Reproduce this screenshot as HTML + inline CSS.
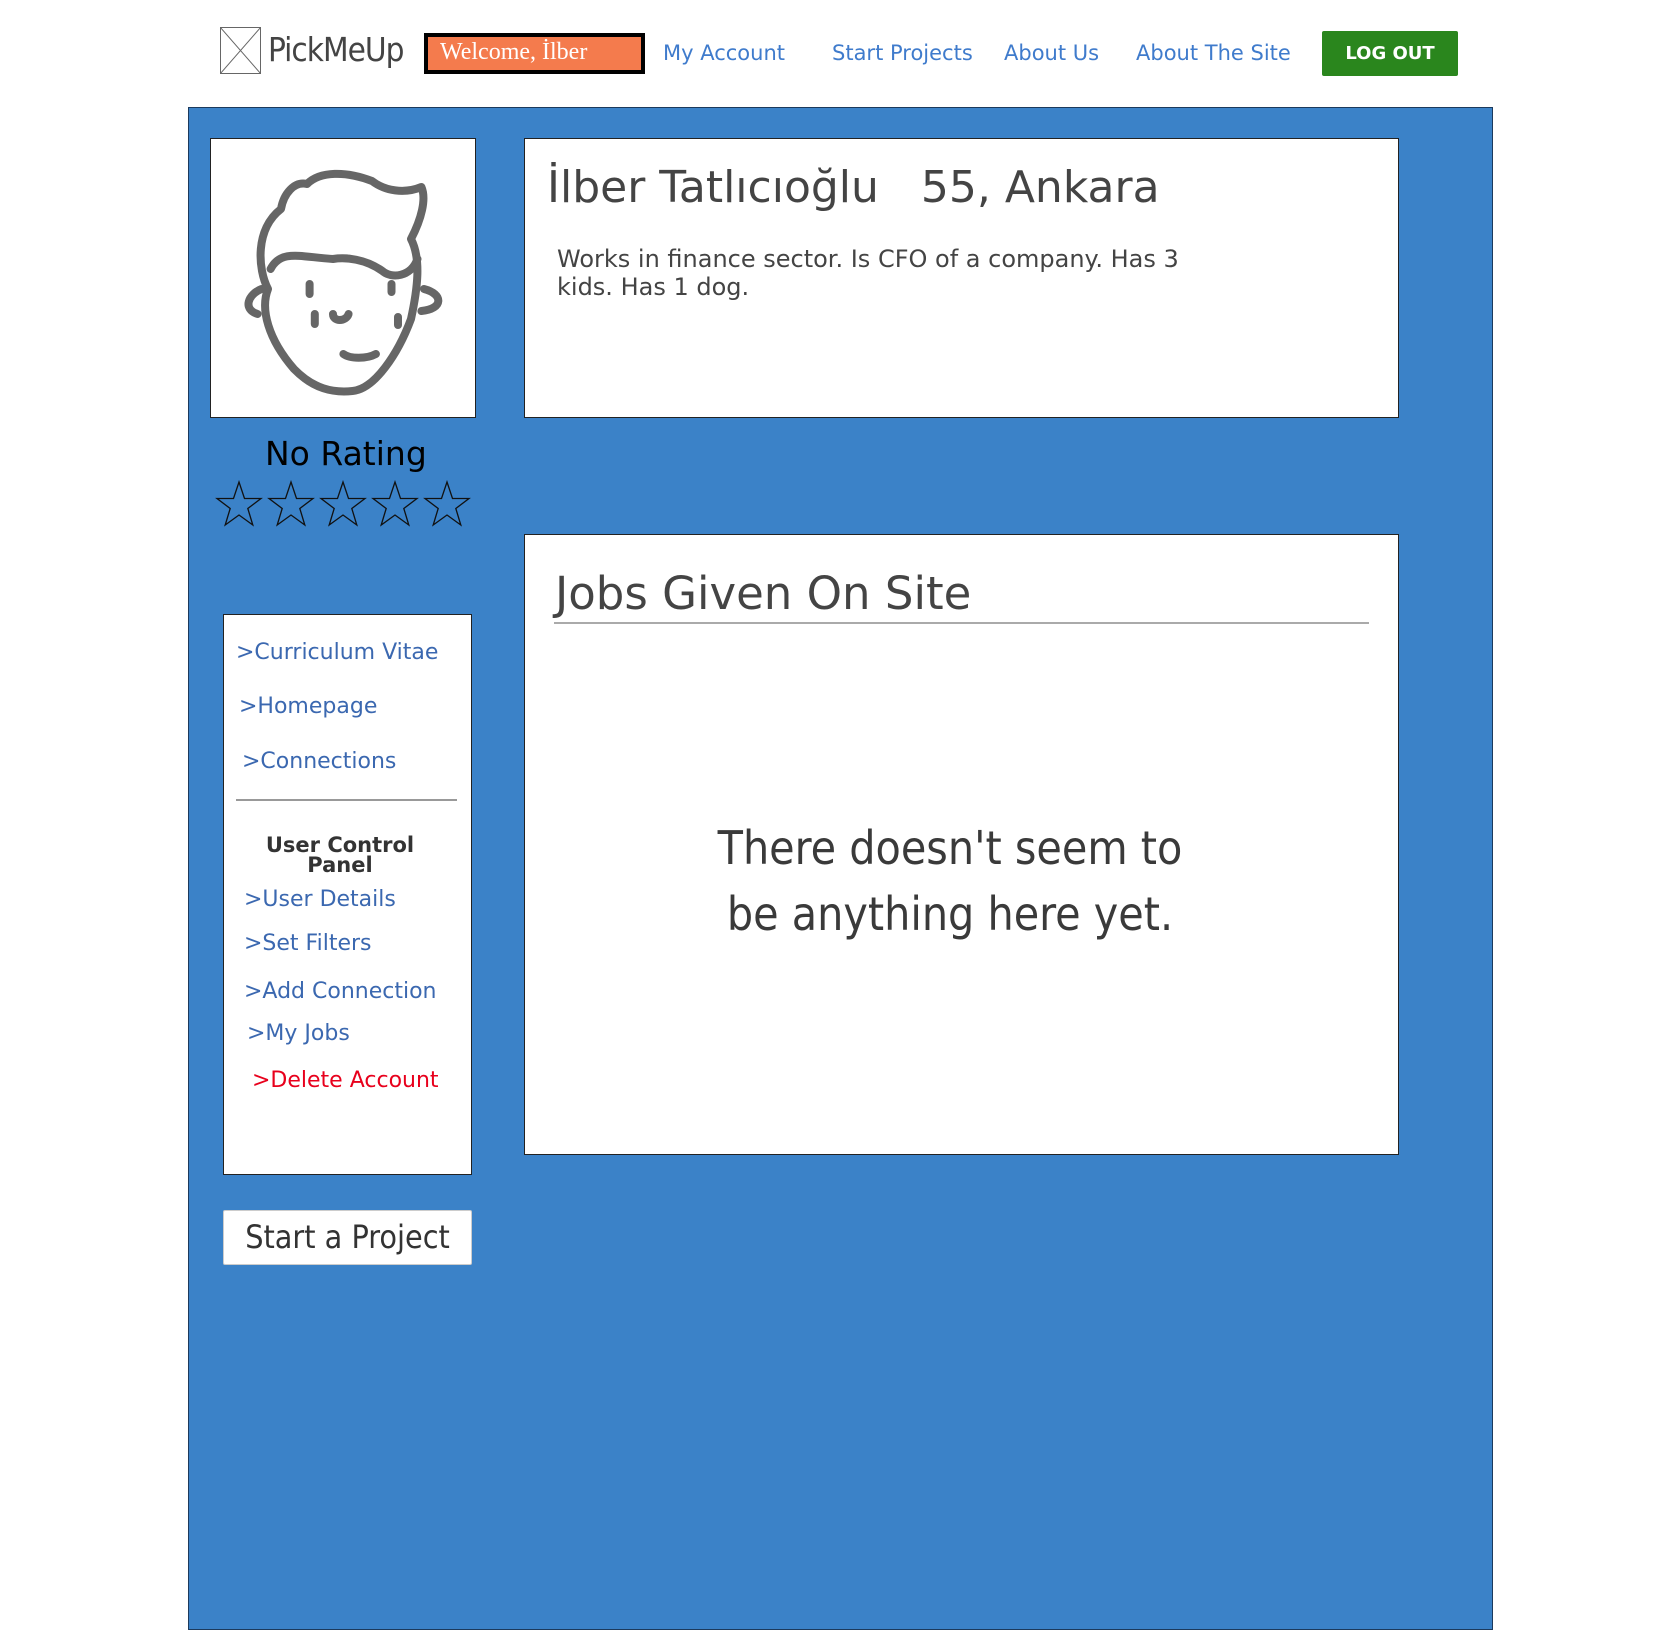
<!DOCTYPE html>
<html><head><meta charset="utf-8"><style>
*{margin:0;padding:0;box-sizing:border-box}
body{width:1680px;height:1640px;background:#fff;position:relative;font-family:"DejaVu Sans","Liberation Sans",sans-serif;overflow:hidden}
.a{position:absolute;white-space:nowrap}
.nav{color:#3f7bcc;font-size:21px;top:41px}
.box{position:absolute;background:#fff;border:1px solid #222}
.lk{position:absolute;color:#3b68b0;font-size:22px;white-space:nowrap}
.hand{font-family:"DejaVu Sans Condensed","Liberation Sans Narrow",sans-serif;color:#333}
</style></head><body>
<svg class="a" style="left:220px;top:27px" width="41" height="47"><rect x="0.5" y="0.5" width="40" height="46" fill="#fff" stroke="#666"/><path d="M0 0L41 47M41 0L0 47" stroke="#666"/></svg>
<div class="a hand" style="left:268px;top:30px;font-size:33px;color:#444;letter-spacing:-1px">PickMeUp</div>
<div class="a" style="left:424px;top:33px;width:221px;height:41px;background:#f47b4d;border:4px solid #000;color:#fff;font-family:'Liberation Serif',serif;font-size:24px;padding:2px 0 0 12px">Welcome, İlber</div>
<div class="a nav" style="left:663px">My Account</div>
<div class="a nav" style="left:832px">Start Projects</div>
<div class="a nav" style="left:1004px">About Us</div>
<div class="a nav" style="left:1136px">About The Site</div>
<div class="a" style="left:1322px;top:31px;width:136px;height:45px;background:#2a861d;color:#fff;font-weight:bold;font-size:18px;text-align:center;line-height:45px;border-radius:2px">LOG OUT</div>

<div class="a" style="left:188px;top:107px;width:1305px;height:1523px;background:#3b82c8;border:1px solid #1c3a5c"></div>

<div class="box" style="left:210px;top:138px;width:266px;height:280px">
<svg width="266" height="280" viewBox="0 0 266 280" fill="none" stroke="#666" stroke-width="8" stroke-linecap="round" stroke-linejoin="round">
<g transform="translate(-8,0) scale(1.3,1)">
<path vector-effect="non-scaling-stroke" d="M60 70C40 90 42 130 50 150C44 170 50 200 70 230C85 250 100 254 115 252C132 250 150 215 160 180C165 150 168 120 160 100C168 80 172 60 168 48C155 55 140 52 130 42C110 32 90 32 80 45C70 42 62 55 60 70Z"/>
<path vector-effect="non-scaling-stroke" d="M52 130C60 110 75 118 100 120C110 118 125 120 138 132C145 140 160 138 165 120"/>
<path vector-effect="non-scaling-stroke" d="M45 150C35 155 30 170 42 175M170 150C185 155 185 170 168 172"/>
<path vector-effect="non-scaling-stroke" d="M82 145v10M145 145v8M86 175v10M150 178v8M108 215c5 5 18 5 25 0"/>
<path vector-effect="non-scaling-stroke" d="M100 175c0 8 10 8 12 0"/>
</g>
</svg></div>

<div class="box" style="left:524px;top:138px;width:875px;height:280px"></div>
<div class="a" style="left:547px;top:162px;font-size:44px;color:#444">İlber Tatlıcıoğlu&nbsp;&nbsp;&nbsp;55, Ankara</div>
<div class="a" style="left:557px;top:245px;font-size:24px;color:#444;line-height:28px">Works in finance sector. Is CFO of a company. Has 3<br>kids. Has 1 dog.</div>

<div class="a" style="left:265px;top:434px;font-size:33px;color:#000">No Rating</div>
<svg class="a" style="left:215px;top:480px" width="260" height="50" viewBox="0 0 260 50" fill="none" stroke="#111" stroke-width="1.3">
<g id="s"><path d="M24 2L29.5 18.5H46L32.8 28.5L37.8 45L24 35L10.2 45L15.2 28.5L2 18.5H18.5Z"/></g>
<use href="#s" x="52"/><use href="#s" x="104"/><use href="#s" x="156"/><use href="#s" x="208"/>
</svg>

<div class="box" style="left:524px;top:534px;width:875px;height:621px"></div>
<div class="a" style="left:555px;top:567px;font-size:45px;color:#444">Jobs Given On Site</div>
<div class="a" style="left:554px;top:622px;width:815px;height:2px;background:#aaa"></div>
<div class="a hand" style="left:700px;top:815px;width:500px;text-align:center;font-size:46px;line-height:66px;color:#3a3a3a;white-space:normal">There doesn't seem to<br>be anything here yet.</div>

<div class="box" style="left:223px;top:614px;width:249px;height:561px"></div>
<div class="lk" style="left:236px;top:640px">&gt;Curriculum Vitae</div>
<div class="lk" style="left:239px;top:694px">&gt;Homepage</div>
<div class="lk" style="left:242px;top:749px">&gt;Connections</div>
<div class="a" style="left:236px;top:799px;width:221px;height:2px;background:#999"></div>
<div class="a" style="left:240px;top:835px;width:200px;text-align:center;font-weight:bold;font-size:21px;line-height:20px;color:#333;white-space:normal">User Control<br>Panel</div>
<div class="lk" style="left:244px;top:887px">&gt;User Details</div>
<div class="lk" style="left:244px;top:931px">&gt;Set Filters</div>
<div class="lk" style="left:244px;top:979px">&gt;Add Connection</div>
<div class="lk" style="left:247px;top:1021px">&gt;My Jobs</div>
<div class="lk" style="left:252px;top:1068px;color:#e8001c">&gt;Delete Account</div>

<div class="a hand" style="left:223px;top:1210px;width:249px;height:55px;background:#fff;border:1px solid #ccc;border-radius:2px;text-align:center;line-height:53px;font-size:32px">Start a Project</div>
</body></html>
